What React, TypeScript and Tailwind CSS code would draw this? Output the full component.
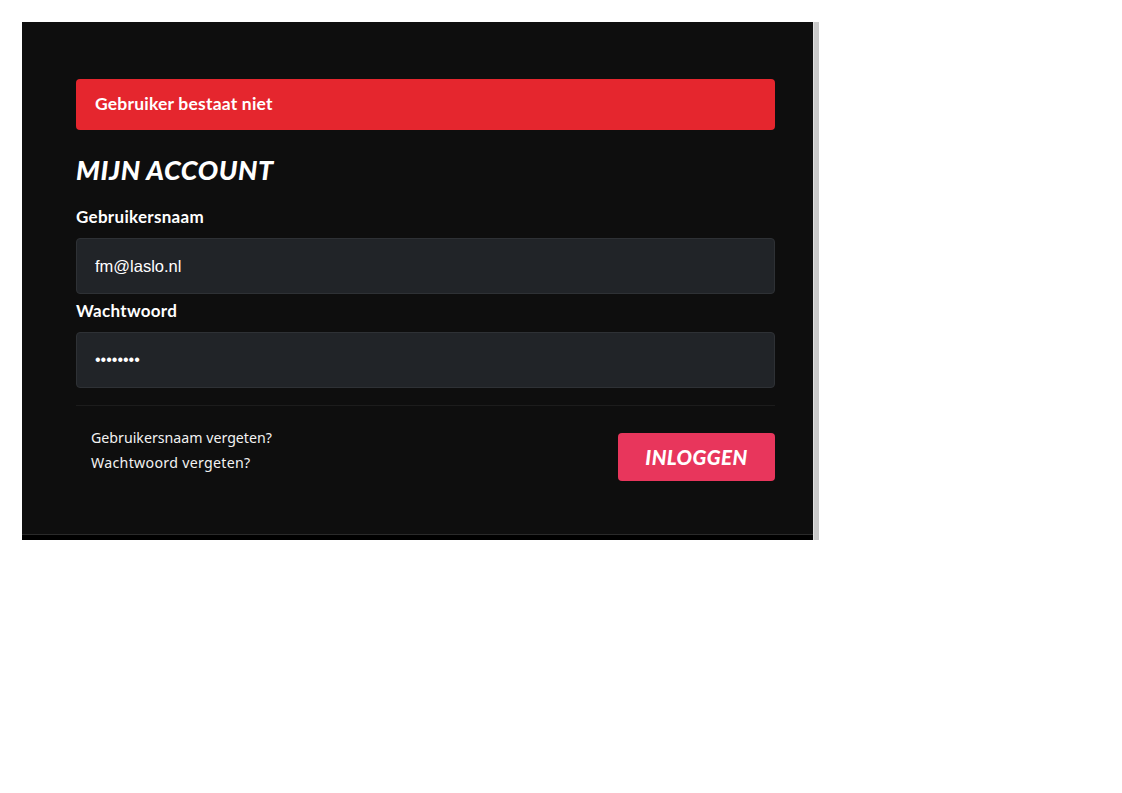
import React from "react";

export default function App() {
  return (
    <div className="min-h-[793px] w-[1122px] bg-white" style={{ fontFamily: '"Noto Sans", sans-serif' }}>
      <div className="pt-[22px] pl-[22px] flex">
        <div className="w-[791px] flex flex-col">
          <div className="bg-[#0e0e0e] h-[512px] pl-[54px] pr-[38px] pt-[57px] flex flex-col">
            <div className="h-[51px] bg-[#e5262e] rounded-[4px] flex items-center px-[19px]">
              <span className="text-white text-[17.5px] font-bold font-['Lato',sans-serif] tracking-[0.2px]">Gebruiker bestaat niet</span>
            </div>
            <h1 className="mt-[25px] h-[30px] text-white text-[27px] font-black italic font-['Lato',sans-serif] leading-[30px] tracking-[0.6px]">MIJN ACCOUNT</h1>
            <label className="mt-[22px] text-white text-[17px] font-bold font-['Lato',sans-serif] leading-[20px] tracking-[0.3px]">Gebruikersnaam</label>
            <div className="mt-[11px] h-[56px] bg-[#212428] border border-[#2e3135] rounded-[4px] flex items-center px-[18px]">
              <span className="text-white text-[16.5px] font-['Liberation_Sans',sans-serif]">fm@laslo.nl</span>
            </div>
            <label className="mt-[7px] text-white text-[17px] font-bold font-['Lato',sans-serif] leading-[20px] tracking-[0.3px]">Wachtwoord</label>
            <div className="mt-[11px] h-[56px] bg-[#212428] border border-[#2e3135] rounded-[4px] flex items-center px-[18px]">
              <span className="text-white text-[16px] font-['Liberation_Sans',sans-serif]">••••••••</span>
            </div>
            <div className="mt-[17px] h-px bg-[#1c1c1c]" />
            <div className="mt-[27px] flex justify-between items-start">
              <div className="pl-[15px] flex flex-col gap-[6px] -mt-[5px]">
                <span className="text-[#f2f2f2] text-[14.2px] leading-[19px]">Gebruikersnaam vergeten?</span>
                <span className="text-[#f2f2f2] text-[14.2px] leading-[19px] tracking-[0.3px]">Wachtwoord vergeten?</span>
              </div>
              <button className="w-[157px] h-[48px] bg-[#e8365c] rounded-[4px] text-white text-[20.5px] font-black italic font-['Lato',sans-serif] tracking-[0.4px]">INLOGGEN</button>
            </div>
          </div>
          <div className="h-px bg-[#2a2a2a]" />
          <div className="h-[5px] bg-black" />
        </div>
        <div className="w-[6px] h-[518px] bg-[#c9c9c9] border-l border-[#e0e0e0]" />
      </div>
    </div>
  );
}
